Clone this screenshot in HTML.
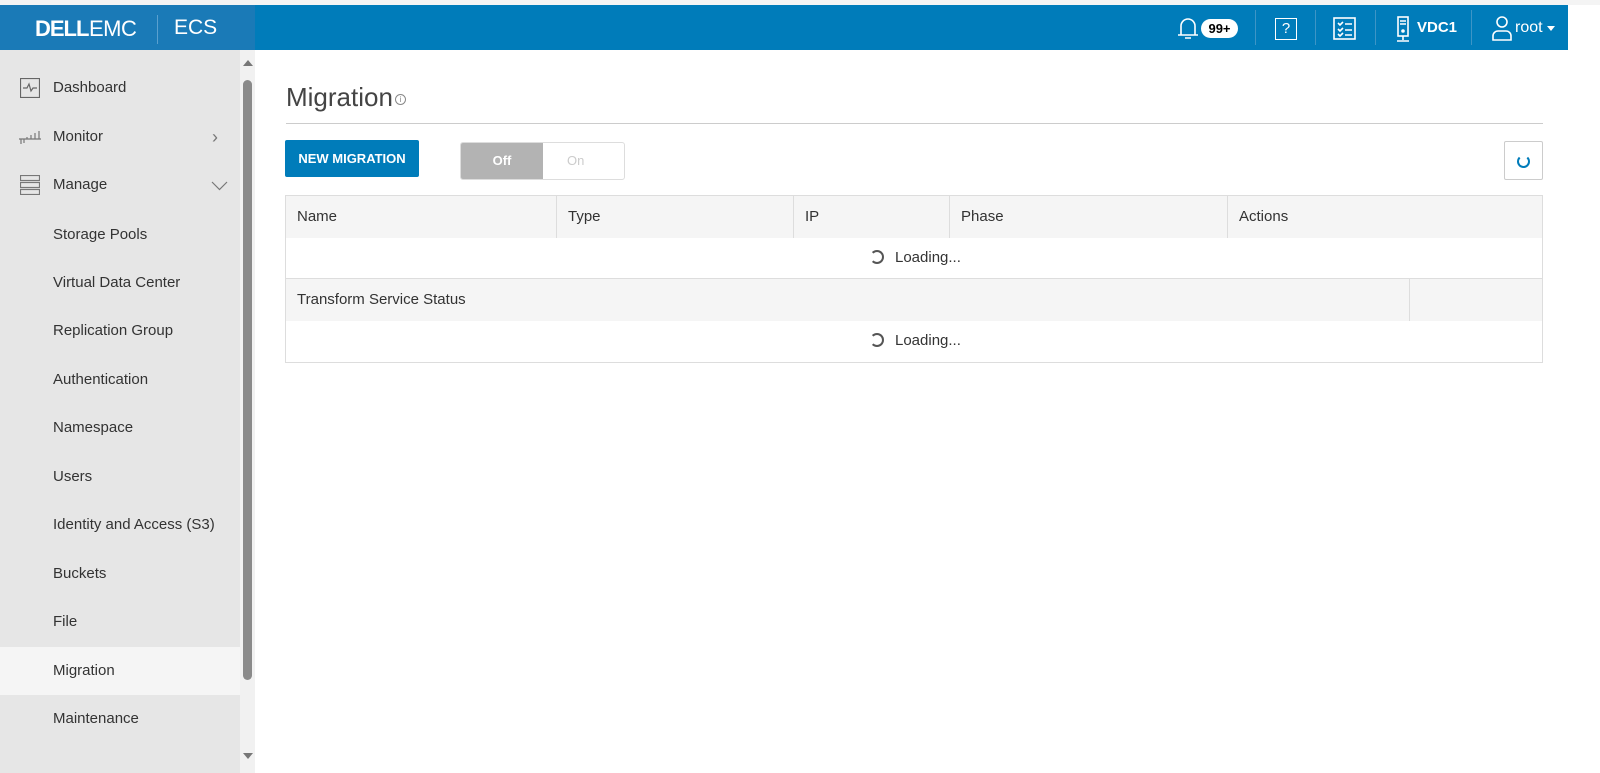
<!DOCTYPE html>
<html><head><style>
*{box-sizing:border-box;margin:0;padding:0}
body{width:1600px;height:773px;overflow:hidden;background:#fff;font-family:"Liberation Sans",sans-serif;position:relative}
.top{position:absolute;top:0;left:0;width:1600px;height:5px;background:#f4f4f4}
.hdr{position:absolute;top:5px;left:0;width:1568px;height:45px;background:#007cba}
.logo{position:absolute;left:0;top:0;width:255px;height:45px;background:#1a7ab7;color:#fff}
.side{position:absolute;top:50px;left:0;width:240px;height:723px;background:#e6e6e6}
.scroll{position:absolute;top:50px;left:240px;width:15px;height:723px;background:#f1f1f1}
.item{position:absolute;left:0;width:240px;height:48px;line-height:48px;font-size:15px;color:#333}
.sub{padding-left:53px}
.h{color:#fff;position:absolute;font-size:15px}
.sep{position:absolute;top:5px;width:1px;height:35px;background:#3d95c6}
th,td{font-weight:normal;text-align:left}
.col{position:absolute;top:0;height:42px;line-height:42px;font-size:15px;color:#333;padding-left:11px;border-right:1px solid #ddd}
</style></head><body>
<div class="top"></div>
<div class="hdr">
 <div class="logo">
  <span style="position:absolute;left:35px;top:11px;font-size:22px;font-weight:bold;letter-spacing:-1px">DELL</span><span style="position:absolute;left:89px;top:11px;font-size:22px;letter-spacing:-0.5px">EMC</span>
  <div style="position:absolute;left:157px;top:10px;width:1px;height:29px;background:#5aa0cf"></div>
  <span style="position:absolute;left:174px;top:11px;font-size:21px">ECS</span>
 </div>
 <svg style="position:absolute;left:1176px;top:10px" width="24" height="26" viewBox="0 0 24 26" fill="none" stroke="#fff" stroke-width="1.6"><path d="M5 20V11a7 7 0 0 1 14 0v9M2 20h20M9 23h6"/></svg>
 <div style="position:absolute;left:1201px;top:14px;width:37px;height:19px;border-radius:10px;background:#fff;color:#000;font-size:13px;font-weight:bold;text-align:center;line-height:19px">99+</div>
 <div class="sep" style="left:1255px"></div>
 <div style="position:absolute;left:1275px;top:13px;width:22px;height:22px;border:1.6px solid #fff;color:#fff;font-size:15px;text-align:center;line-height:19px">?</div>
 <div class="sep" style="left:1315px"></div>
 <svg style="position:absolute;left:1333px;top:12px" width="24" height="24" viewBox="0 0 24 24" fill="none" stroke="#fff" stroke-width="1.6"><rect x="1" y="1" width="21" height="21"/><path d="M5 6l2 2 3-3M5 12l2 2 3-3M5 17l2 2 3-3M12 7h7M12 13h7M12 18h7"/></svg>
 <div class="sep" style="left:1375px"></div>
 <svg style="position:absolute;left:1395px;top:11px" width="16" height="27" viewBox="0 0 16 27" fill="none" stroke="#fff" stroke-width="1.6"><rect x="3" y="1" width="10" height="19"/><path d="M5 5h6M5 8h6M8 20v4M2 25h12"/><circle cx="8" cy="15" r="1" fill="#fff"/></svg>
 <span class="h" style="left:1417px;top:14px;font-weight:bold;font-size:15px">VDC1</span>
 <div class="sep" style="left:1471px"></div>
 <svg style="position:absolute;left:1491px;top:10px" width="22" height="26" viewBox="0 0 22 26" fill="none" stroke="#fff" stroke-width="1.6"><circle cx="11" cy="7" r="5"/><path d="M2 25v-4a5 5 0 0 1 5-5h8a5 5 0 0 1 5 5v4z"/></svg>
 <span class="h" style="left:1515px;top:14px;font-size:16px">root</span>
 <div style="position:absolute;left:1547px;top:21px;border:4px solid transparent;border-top:5px solid #fff"></div>
</div>
<div class="side">
 <div class="item" style="top:14px"><svg style="position:absolute;left:20px;top:14px" width="20" height="20" fill="none" stroke="#666" stroke-width="1.2"><rect x=".5" y=".5" width="19" height="19"/><path d="M3 10h4l2-4 2 7 2-3h4"/></svg><span class="sub">Dashboard</span></div>
 <div class="item" style="top:63px"><svg style="position:absolute;left:18px;top:14px" width="24" height="20" fill="none" stroke="#777" stroke-width="1.2"><path d="M1 12h22M3 12v5M6 12v4M9 12v-2M13 12v-4M17 12v-6M21 12v-8"/></svg><span class="sub">Monitor</span><span style="position:absolute;left:212px;color:#777;font-size:18px">&#x203A;</span></div>
 <div class="item" style="top:111px"><svg style="position:absolute;left:20px;top:14px" width="20" height="20" fill="none" stroke="#777" stroke-width="1.2"><rect x=".5" y=".5" width="19" height="5"/><rect x=".5" y="7.5" width="19" height="5"/><rect x=".5" y="14.5" width="19" height="5"/></svg><span class="sub">Manage</span><svg style="position:absolute;left:211px;top:20px" width="17" height="10" fill="none" stroke="#777" stroke-width="1.2"><path d="M1 1l7.5 7.5L16 1"/></svg></div>
 <div class="item sub" style="top:161px">Storage Pools</div>
 <div class="item sub" style="top:209px">Virtual Data Center</div>
 <div class="item sub" style="top:257px">Replication Group</div>
 <div class="item sub" style="top:306px">Authentication</div>
 <div class="item sub" style="top:354px">Namespace</div>
 <div class="item sub" style="top:403px">Users</div>
 <div class="item sub" style="top:451px">Identity and Access (S3)</div>
 <div class="item sub" style="top:500px">Buckets</div>
 <div class="item sub" style="top:548px">File</div>
 <div class="item sub" style="top:597px;background:#f5f5f5">Migration</div>
 <div class="item sub" style="top:645px">Maintenance</div>
</div>
<div class="scroll"><div style="position:absolute;left:3px;top:10px;border:5px solid transparent;border-bottom:6px solid #777;border-top:0"></div><div style="position:absolute;left:3px;top:30px;width:9px;height:600px;border-radius:5px;background:#8a8a8a"></div><div style="position:absolute;left:3px;top:703px;border:5px solid transparent;border-top:6px solid #777;border-bottom:0"></div></div>

<div style="position:absolute;left:286px;top:82px;font-size:26px;color:#444">Migration</div>
<div style="position:absolute;left:395px;top:94px;width:11px;height:11px;border:1px solid #888;border-radius:50%;font-size:8px;color:#888;text-align:center;line-height:10px">i</div>
<div style="position:absolute;left:286px;top:123px;width:1257px;height:1px;background:#ccc"></div>
<div style="position:absolute;left:285px;top:140px;width:134px;height:37px;background:#007cba;border-radius:2px;color:#fff;font-size:13px;font-weight:bold;text-align:center;line-height:37px">NEW MIGRATION</div>
<div style="position:absolute;left:460px;top:142px;width:165px;height:38px;border:1px solid #ddd;border-radius:3px;overflow:hidden"><div style="position:absolute;left:0;top:0;width:82px;height:38px;background:#b3b3b3;color:#fff;font-size:13px;font-weight:bold;text-align:center;line-height:36px">Off</div><div style="position:absolute;left:106px;top:10px;color:#ccc;font-size:13px">On</div></div>
<div style="position:absolute;left:1504px;top:141px;width:39px;height:39px;border:1px solid #ccc;border-radius:2px"><div style="position:absolute;left:12px;top:13px;width:13px;height:13px;border:2px solid #007cba;border-top-color:transparent;border-radius:50%"></div></div>

<div style="position:absolute;left:285px;top:195px;width:1258px;height:84px;border:1px solid #ddd">
 <div style="position:absolute;left:0;top:0;width:1256px;height:42px;background:#f5f5f5"></div>
 <div class="col" style="left:0;width:271px">Name</div>
 <div class="col" style="left:271px;width:237px">Type</div>
 <div class="col" style="left:508px;width:156px">IP</div>
 <div class="col" style="left:664px;width:278px">Phase</div>
 <div class="col" style="left:942px;width:314px;border:0">Actions</div>
 <div style="position:absolute;left:584px;top:54px;width:14px;height:14px;border:2px solid #555;border-left-color:transparent;border-radius:50%"></div>
 <div style="position:absolute;left:609px;top:53px;font-size:15px;color:#333">Loading...</div>
</div>
<div style="position:absolute;left:285px;top:279px;width:1258px;height:84px;border:1px solid #ddd;border-top:0">
 <div style="position:absolute;left:0;top:0;width:1256px;height:42px;background:#f5f5f5"></div>
 <div class="col" style="left:0;width:1124px">Transform Service Status</div>
 <div style="position:absolute;left:584px;top:54px;width:14px;height:14px;border:2px solid #555;border-left-color:transparent;border-radius:50%"></div>
 <div style="position:absolute;left:609px;top:53px;font-size:15px;color:#333">Loading...</div>
</div>
</body></html>
